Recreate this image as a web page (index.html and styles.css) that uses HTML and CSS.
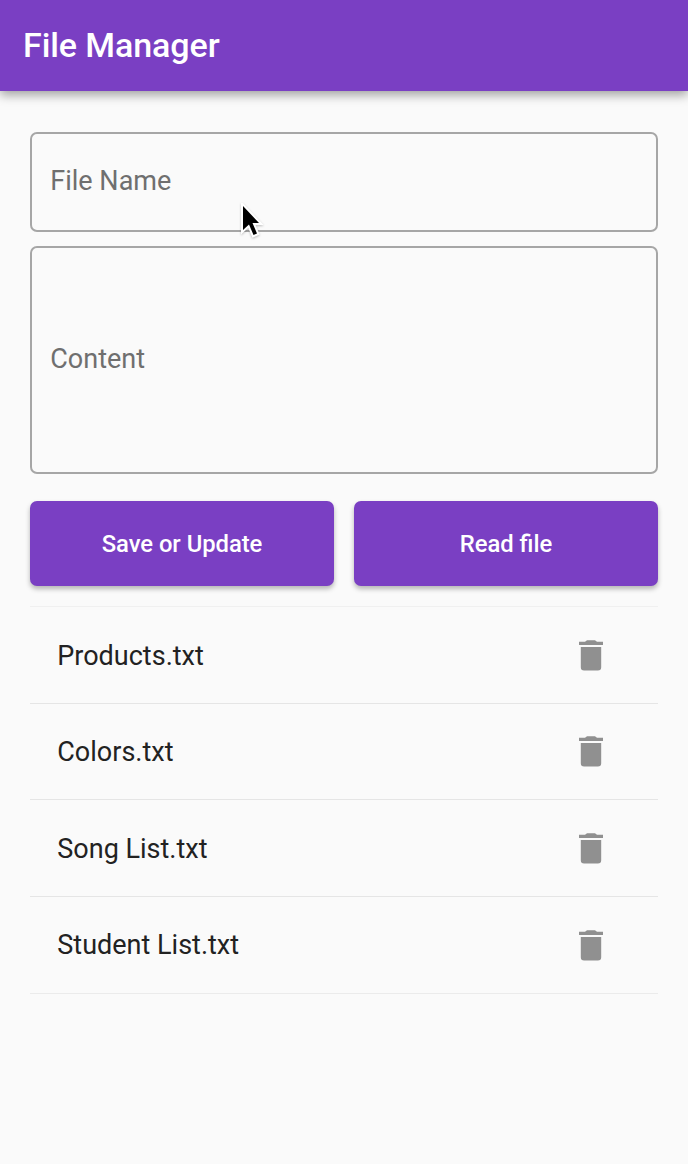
FILE: index.html
```html
<!DOCTYPE html>
<html lang="en">
<head>
<meta charset="utf-8">
<title>File Manager</title>
<link rel="stylesheet" href="styles.css">
</head>
<body>
<svg class="defs" width="0" height="0"><symbol id="trash" viewBox="0 0 24 31"><path d="M1.800 7h20.400v20.300a3.300 3.300 0 0 1-3.300 3.300H5.100a3.300 3.300 0 0 1-3.300-3.300zM0 1.700h6L8 .2h8l2 1.500h6V5H0z"/></symbol></svg>
<header class="appbar"><h1 class="title">File Manager</h1></header>
<main class="content">
<input class="field name" placeholder="File Name" aria-label="File Name">
<div class="field body"><span>Content</span></div>
<div class="actions"><button class="button save">Save or Update</button><button class="button">Read file</button></div>
<ul class="files">
<li class="file"><span class="label">Products.txt</span><svg class="trash"><use href="#trash"/></svg></li>
<li class="file compact"><span>Colors.txt</span><svg class="trash"><use href="#trash"/></svg></li>
<li class="file"><span class="label">Song List.txt</span><svg class="trash"><use href="#trash"/></svg></li>
<li class="file"><span>Student List.txt</span><svg class="trash"><use href="#trash"/></svg></li>
</ul>
</main>
<svg class="cursor" viewBox="0 0 24 36"><path class="outline" d="M3 3v24l6-5.500 4.500 10.500 3.500-1.500L12.500 20H19z"/><path d="M3 3v24l6-5.500 4.500 10.500 3.500-1.500L12.500 20H19z"/></svg>
</body>
</html>
```
FILE: styles.css
```css
* { box-sizing: border-box; }
body { margin: 0; min-height: 1164px; background: #fafafa; color: #222; font: 27px/32px Roboto, sans-serif; }
.defs { position: absolute; }
.appbar { height: 91px; padding: 0 23px 2px; display: flex; align-items: center; background: #7a3fc3; color: #fff; box-shadow: 0 4px 10px rgba(0,0,0,.36); }
.title { margin: 0; font-size: 34px; line-height: 40px; font-weight: 500; letter-spacing: -.08px; }
.content { padding: 41px 30px 0; }
.field { display: flex; align-items: center; width: 100%; padding: 0 18.300px 2px; border: 2px solid #a6a6a6; border-radius: 7px; background: transparent; font: inherit; color: #6f6f6f; }
.field::placeholder { color: #6f6f6f; opacity: 1; }
.name { height: 100px; }
.body { height: 228px; margin-top: 14px; }
.actions { display: grid; grid-template-columns: 1fr 1fr; gap: 20px; margin-top: 27px; }
.button { height: 84.500px; padding: 1.500px 0 0; border: 0; border-radius: 7px; background: #7a3fc3; color: #fff; font: 500 23.800px Roboto, sans-serif; box-shadow: 0 3px 5px rgba(0,0,0,.28); }
.save { letter-spacing: -.03px; }
.files { margin: 20.500px 0 0; padding: 0; list-style: none; border-top: 1px solid #f0f0f0; }
.file { height: 97px; padding: 0 55.300px 0 27.300px; display: flex; align-items: center; justify-content: space-between; border-bottom: 1px solid #e5e5e5; }
.compact { height: 96px; }
.label { padding-top: 2px; }
.file:last-child { border-bottom-color: #ebebeb; }
.trash { width: 24px; height: 31px; fill: #909090; }
.cursor { position: absolute; left: 240px; top: 203px; width: 24px; height: 36px; fill: #000; filter: drop-shadow(0 1px 1px rgba(0,0,0,.25)); }
.outline { fill: #fff; stroke: #fff; stroke-width: 4; }
```
